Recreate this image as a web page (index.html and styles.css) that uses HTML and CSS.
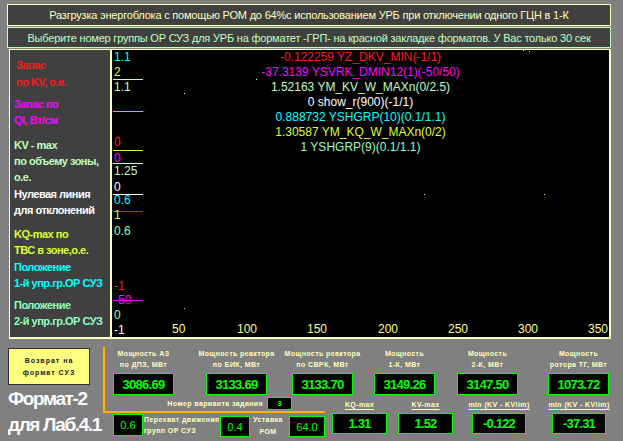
FILE: index.html
```html
<!DOCTYPE html>
<html lang="ru">
<head>
<meta charset="utf-8">
<title>Формат-2</title>
<link rel="stylesheet" href="styles.css">
</head>
<body>
<div class="screen">
  <div class="bar bar1">Разгрузка энергоблока с помощью РОМ до 64%с использованием УРБ при отключении одного ГЦН в 1-К</div>
  <div class="bar bar2">Выберите номер группы ОР СУЗ для УРБ на форматет -ГРП- на красной закладке форматов. У Вас только 30 сек</div>

  <div class="main">
    <div class="legend">
      <div class="lg g1 c-red"><div>Запас</div><div>по KV, о.е.</div></div>
      <div class="lg g2 c-mag"><div>Запас по</div><div>Ql, Вт/см</div></div>
      <div class="lg g3 c-lg"><div>KV - max</div><div>по объему зоны,</div><div>о.е.</div></div>
      <div class="lg g4 c-wh"><div>Нулевая линия</div><div>для отклонений</div></div>
      <div class="lg g5 c-yg"><div>KQ-max по</div><div>ТВС в зоне,о.е.</div></div>
      <div class="lg g6 c-cy"><div>Положение</div><div>1-й упр.гр.ОР СУЗ</div></div>
      <div class="lg g7 c-mint"><div>Положение</div><div>2-й упр.гр.ОР СУЗ</div></div>
    </div>
    <div class="chart">
      <div class="series">
        <div class="c-red">-0.122259 YZ_DKV_MIN(-1/1)</div>
        <div class="c-mag">-37.3139 YSVRK_DMIN12(1)(-50/50)</div>
        <div class="c-lg">1.52163 YM_KV_W_MAXn(0/2.5)</div>
        <div class="c-wh">0 show_r(900)(-1/1)</div>
        <div class="c-cy">0.888732 YSHGRP(10)(0.1/1.1)</div>
        <div class="c-yg">1.30587 YM_KQ_W_MAXn(0/2)</div>
        <div class="c-mint">1 YSHGRP(9)(0.1/1.1)</div>
      </div>

      <span class="hl bg-lg" style="top:29px"></span>
      <span class="hl bg-cy" style="top:61px"></span>
      <span class="hl bg-yg" style="top:100px"></span>
      <span class="hl bg-lg" style="top:113px"></span>
      <span class="hl bg-wh" style="top:144px"></span>
      <span class="hl bg-red" style="top:161px"></span>
      <span class="hl bg-mag" style="top:250px"></span>

      <span class="yl c-cy" style="top:0px">1.1</span>
      <span class="yl c-yg" style="top:15px">2</span>
      <span class="yl c-lg" style="top:30px">1.1</span>
      <span class="yl c-red" style="top:85px">0</span>
      <span class="yl c-mag" style="top:101px">0</span>
      <span class="yl c-lg" style="top:114px">1.25</span>
      <span class="yl c-wh" style="top:130px">0</span>
      <span class="yl c-cy" style="top:143px">0.6</span>
      <span class="yl c-yg" style="top:158px">1</span>
      <span class="yl c-mint" style="top:174px">0.6</span>
      <span class="yl c-red" style="top:229px">-1</span>
      <span class="yl c-mag" style="top:243px">-50</span>
      <span class="yl c-mint" style="top:258px">0</span>
      <span class="yl c-wh" style="top:273px">-1</span>

      <span class="xl" style="left:60px">50</span>
      <span class="xl" style="left:125px">100</span>
      <span class="xl" style="left:195px">150</span>
      <span class="xl" style="left:266px">200</span>
      <span class="xl" style="left:336px">250</span>
      <span class="xl" style="left:406px">300</span>
      <span class="xl" style="left:476px">350</span>

      <span class="dot bg-wh" style="left:144px;top:29px"></span>
      <span class="dot bg-wh" style="left:72px;top:43px"></span>
      <span class="dot bg-yg" style="left:312px;top:144px"></span>
      <span class="dot bg-yg" style="left:432px;top:144px"></span>
      <span class="dot bg-yg" style="left:72px;top:258px"></span>
      <span class="dot bg-cy" style="left:306px;top:100px"></span>
      <span class="dot bg-wh" style="left:411px;top:0px"></span>
      <span class="dot bg-wh" style="left:417px;top:1px"></span>
    </div>
  </div>

  <div class="bottom">
    <div class="bl">
      <div class="btn"><div>Возврат на</div><div>формат СУЗ</div></div>
      <div class="fmt">Формат-2</div>
      <div class="fmt">для Лаб.4.1</div>
    </div>

    <div class="rr">
      <div class="frame"></div>
      <div class="row1">
        <div class="grp g-1">
          <div class="lbl"><div>Мощность АЗ</div><div>по ДПЗ, МВт</div></div>
          <div class="box big">3086.69</div>
        </div>
        <div class="grp g-2">
          <div class="lbl"><div>Мощность реактора</div><div>по БИК, МВт</div></div>
          <div class="box big">3133.69</div>
        </div>
        <div class="grp g-3">
          <div class="lbl"><div>Мощность реактора</div><div>по СВРК, МВт</div></div>
          <div class="box big">3133.70</div>
        </div>
        <div class="grp g-4">
          <div class="lbl"><div>Мощность</div><div>1-К, МВт</div></div>
          <div class="box big">3149.26</div>
        </div>
        <div class="grp g-5">
          <div class="lbl"><div>Мощность</div><div>2-К, МВт</div></div>
          <div class="box big">3147.50</div>
        </div>
        <div class="grp g-6">
          <div class="lbl"><div>Мощность</div><div>ротора ТГ, МВт</div></div>
          <div class="box big">1073.72</div>
        </div>
      </div>

      <div class="lower">
        <div class="ll">
          <div class="variant">
            <div class="lbl">Номер варианта задания</div>
            <div class="box vbox">3</div>
          </div>
          <div class="row3">
            <div class="box sbox w30">0.6</div>
            <div class="lbl intercept"><div>Перехват движения</div><div>групп ОР СУЗ</div></div>
            <div class="box sbox sbox2 w30">0.4</div>
            <div class="lbl ust"><div>Уставка</div><div>РОМ</div></div>
            <div class="box sbox sbox2 w36">64.0</div>
          </div>
        </div>
        <div class="rg rg-1">
          <div class="lbl ul">KQ-max</div>
          <div class="box rbox w55">1.31</div>
        </div>
        <div class="rg rg-2">
          <div class="lbl ul">KV-max</div>
          <div class="box rbox w55">1.52</div>
        </div>
        <div class="rg rg-3">
          <div class="lbl ul">min (KV - KVlim)</div>
          <div class="box rbox w54">-0.122</div>
        </div>
        <div class="rg rg-4">
          <div class="lbl ul">min (KV - KVlim)</div>
          <div class="box rbox w54">-37.31</div>
        </div>
      </div>
    </div>
  </div>
</div>
</body>
</html>
```

FILE: styles.css
```css
* { box-sizing: border-box; }

html, body {
  margin: 0;
  padding: 0;
}

body {
  width: 623px;
  height: 441px;
  overflow: hidden;
  background: #808080;
  font-family: "Liberation Sans", Arial, sans-serif;
}

.screen {
  padding-top: 4px;
}

/* ---------- title bars ---------- */
.bar {
  margin-left: 7px;
  width: 604px;
  height: 22px;
  border: 1px solid #ffffc0;
  background: #404040;
  color: #ffffc0;
  font-size: 11px;
  letter-spacing: -0.2px;
  display: flex;
  align-items: center;
  justify-content: center;
  white-space: nowrap;
}

.bar2 {
  margin-top: 1px;
  height: 21px;
  border-color: #c0ffc0;
  color: #c0ffc0;
}

/* ---------- main area ---------- */
.main {
  display: flex;
  margin-left: 9px;
  margin-top: 1px;
  width: 602px;
  height: 290px;
  border-top: 1px solid #ffffc0;
  border-bottom: 2px solid #ffffc0;
}

.legend {
  width: 103px;
  background: #404040;
  border-left: 1px solid #ffffc0;
  border-right: 2px solid #ffffc0;
  padding: 7px 0 0 4px;
  font-size: 11px;
  font-weight: bold;
  letter-spacing: -0.5px;
  white-space: nowrap;
}

.lg { line-height: 16px; }
.g1 { line-height: 17px; padding-left: 2px; }
.g2 { margin-top: 5px; }
.g3 { margin-top: 9px; }
.g4 { margin-top: 1px; }
.g5 { margin-top: 7.5px; }
.g6 { margin-top: 1.5px; }
.g7 { margin-top: 6px; }

.chart {
  flex: 1;
  position: relative;
  background: #000;
  border-right: 2px solid #ffffc0;
  overflow: hidden;
  font-size: 12px;
}

.series {
  text-align: center;
  line-height: 15px;
  white-space: nowrap;
}

.hl {
  position: absolute;
  left: 1px;
  width: 30px;
  height: 1px;
}

.yl {
  position: absolute;
  left: 2px;
  line-height: 14px;
}

.xl {
  position: absolute;
  top: 272px;
  line-height: 14px;
  color: #ffff80;
}

.dot {
  position: absolute;
  width: 1px;
  height: 1px;
}

/* colours */
.c-red { color: #ff1818; }
.c-mag { color: #ff00ff; }
.c-lg { color: #c0ffc0; }
.c-wh { color: #ffffff; }
.c-cy { color: #00ffff; }
.c-yg { color: #dcff30; }
.c-mint { color: #90ffc0; }

.bg-red { background: #ff1818; }
.bg-mag { background: #ff00ff; }
.bg-lg { background: #c0ffc0; }
.bg-wh { background: #ffffff; }
.bg-cy { background: #00ffff; }
.bg-yg { background: #dcff30; }

/* ---------- bottom ---------- */
.bottom {
  display: flex;
  margin-top: 8px;
  padding-left: 8px;
}

.bl {
  width: 95px;
  padding-top: 1px;
}

.btn {
  width: 82px;
  height: 37px;
  background: #ffff80;
  border: 1px solid #303030;
  display: flex;
  flex-direction: column;
  align-items: center;
  justify-content: center;
  font-size: 7px;
  font-weight: bold;
  letter-spacing: 1px;
  line-height: 12px;
  color: #202020;
}

.fmt {
  color: #ffffff;
  font-weight: bold;
  font-size: 19px;
  line-height: 26px;
  letter-spacing: -1.4px;
  white-space: nowrap;
}

.btn + .fmt { margin-top: 1px; }

.rr {
  position: relative;
  display: flex;
  flex-direction: column;
}

.frame {
  position: absolute;
  left: 0;
  top: 0;
  width: 222px;
  height: 66px;
  border-left: 2px solid #ffb000;
  border-bottom: 2px solid #ffb000;
}

.row1 { display: flex; }

.grp {
  width: 81px;
  display: flex;
  flex-direction: column;
  align-items: center;
}

.g-2 { margin-left: 12px; }
.g-3 { margin-left: 5px; }
.g-4 { margin-left: 1px; }
.g-5 { margin-left: 2px; }
.g-6 { margin-left: 10px; }

.lbl {
  font-size: 7px;
  font-weight: bold;
  color: #ffffc0;
  letter-spacing: 0.4px;
  line-height: 11px;
  text-align: center;
  white-space: nowrap;
}

.row1 .lbl { padding-top: 0.5px; }

.box {
  background: #000;
  border: 1px solid #00ff00;
  color: #00ff00;
  display: flex;
  align-items: center;
  justify-content: center;
  white-space: nowrap;
}

.big {
  width: 61px;
  height: 22px;
  margin-top: 3.5px;
  font-size: 13px;
  font-weight: bold;
  letter-spacing: -0.7px;
}

.lower { display: flex; }

.ll { width: 222px; }

.variant {
  display: flex;
  justify-content: flex-end;
  align-items: center;
  gap: 4px;
  padding-right: 33px;
  margin-top: 2px;
}

.vbox {
  width: 25px;
  height: 13px;
  font-size: 8px;
  font-weight: bold;
}

.row3 {
  display: flex;
  align-items: flex-start;
  padding-left: 10px;
  margin-top: 4px;
}

.sbox {
  height: 22px;
  font-size: 11px;
}

.sbox2 {
  margin-top: 2px;
  height: 21px;
}

.w30 { width: 30px; }
.w36 { width: 36px; margin-left: 3px; }
.w54 { width: 54px; }
.w55 { width: 55px; }

.intercept {
  width: 74px;
  margin-left: 1px;
  margin-right: 2px;
  text-align: left;
}

.ust {
  width: 36px;
  line-height: 12px;
}

.rg {
  display: flex;
  flex-direction: column;
  align-items: center;
}

.rg-1 { margin-left: 7px; width: 55px; }
.rg-2 { margin-left: 11px; width: 55px; }
.rg-3 { margin-left: 19px; width: 54px; }
.rg-4 { margin-left: 26px; width: 54px; }

.ul {
  margin-top: 3.5px;
  text-decoration: underline;
  text-underline-offset: 2px;
}

.rbox {
  height: 21px;
  margin-top: 3.5px;
  font-size: 13px;
  font-weight: bold;
  letter-spacing: -0.8px;
}
```
